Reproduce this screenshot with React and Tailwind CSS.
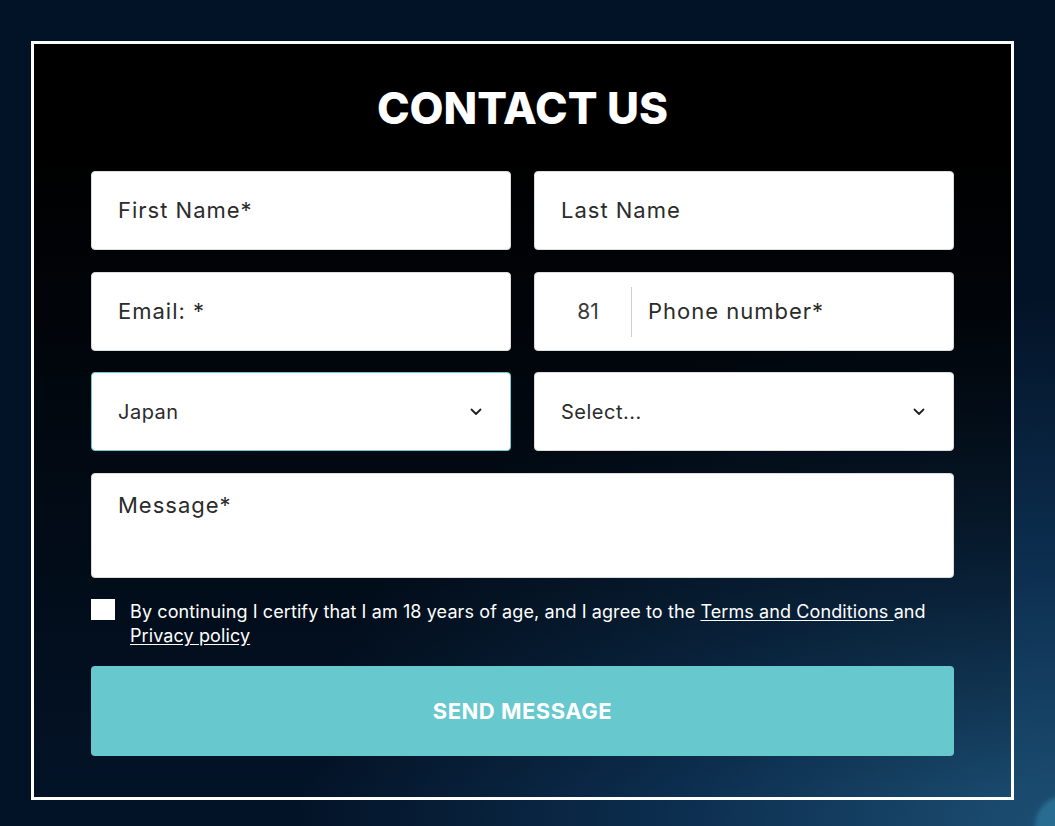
import React from "react";

function Chevron() {
  return (
    <svg width="12" height="8" viewBox="0 0 12 8" fill="none" className="shrink-0">
      <path d="M1.5 1.5 L6 6 L10.5 1.5" stroke="#222" strokeWidth="1.8" strokeLinecap="round" strokeLinejoin="round" />
    </svg>
  );
}

export default function App() {
  return (
    <div
      className="relative min-h-[826px] w-full overflow-hidden bg-[radial-gradient(ellipse_90%_80%_at_100%_100%,#1c4f73_0%,#0c2e4f_40%,#031327_80%)] pt-[41px] pl-[31px]"
      style={{ fontFamily: "Inter, 'Open Sans', sans-serif" }}
    >
      <div className="absolute right-[-40px] bottom-[-50px] h-[80px] w-[60px] rounded-full bg-[#2f7a9f] opacity-70 blur-[2px]" />
      <div className="relative flex h-[759px] w-[983px] flex-col border-[3px] border-white bg-[linear-gradient(to_bottom,#000000_0%,#000000_15%,rgba(0,0,0,0)_100%)] px-[57px] pt-[40px]">
        <h1 className="flex h-[48px] items-center justify-center text-[44px] font-extrabold text-white">
          CONTACT US
        </h1>

        <div className="mt-[39px] grid grid-cols-2 gap-x-[23px] text-[22px] tracking-[1px] text-[#2b2b2b]">
          <div className="flex h-[79px] items-center rounded-[4px] border border-[#dcdcdc] bg-white pl-[26px]">
            First Name*
          </div>
          <div className="flex h-[79px] items-center rounded-[4px] border border-[#dcdcdc] bg-white pl-[26px]">
            Last Name
          </div>
        </div>

        <div className="mt-[22px] grid grid-cols-2 gap-x-[23px] text-[22px] tracking-[1px] text-[#2b2b2b]">
          <div className="flex h-[79px] items-center rounded-[4px] border border-[#dcdcdc] bg-white pl-[26px]">
            Email: *
          </div>
          <div className="flex h-[79px] items-center rounded-[4px] border border-[#dcdcdc] bg-white">
            <div className="flex w-[96px] items-center justify-center pl-[10px] text-[21px] tracking-normal text-[#3a3a3a]">81</div>
            <div className="h-[50px] w-px bg-[#cfcfcf]" />
            <div className="pl-[16px]">Phone number*</div>
          </div>
        </div>

        <div className="mt-[21px] grid grid-cols-2 gap-x-[23px] text-[20px] tracking-[0.5px] text-[#2b2b2b]">
          <div className="flex h-[79px] items-center justify-between rounded-[4px] border border-[#6cc9cf] bg-white pr-[28px] pl-[26px]">
            <span>Japan</span>
            <Chevron />
          </div>
          <div className="flex h-[79px] items-center justify-between rounded-[4px] border border-[#dcdcdc] bg-white pr-[28px] pl-[26px]">
            <span>Select...</span>
            <Chevron />
          </div>
        </div>

        <div className="mt-[22px] h-[105px] rounded-[4px] border border-[#dcdcdc] bg-white pt-[15px] pl-[26px] text-[22px] tracking-[1px] text-[#2b2b2b]">
          Message*
        </div>

        <div className="mt-[22px] flex items-start gap-[15px]">
          <div className="mt-[-1px] h-[21px] w-[24px] shrink-0 bg-white" />
          <p className="text-[18px] leading-[24px] tracking-[0.1px] text-white">
            By continuing I certify that I am 18 years of age, and I agree to the{" "}
            <span className="underline underline-offset-2">Terms and Conditions </span>and{" "}
            <span className="underline underline-offset-2">Privacy policy</span>
          </p>
        </div>

        <button className="mt-[18px] flex h-[90px] w-full items-center justify-center rounded-[4px] bg-[#67c8ce] text-[22px] font-bold tracking-[0.5px] text-white">
          SEND MESSAGE
        </button>
      </div>
    </div>
  );
}
